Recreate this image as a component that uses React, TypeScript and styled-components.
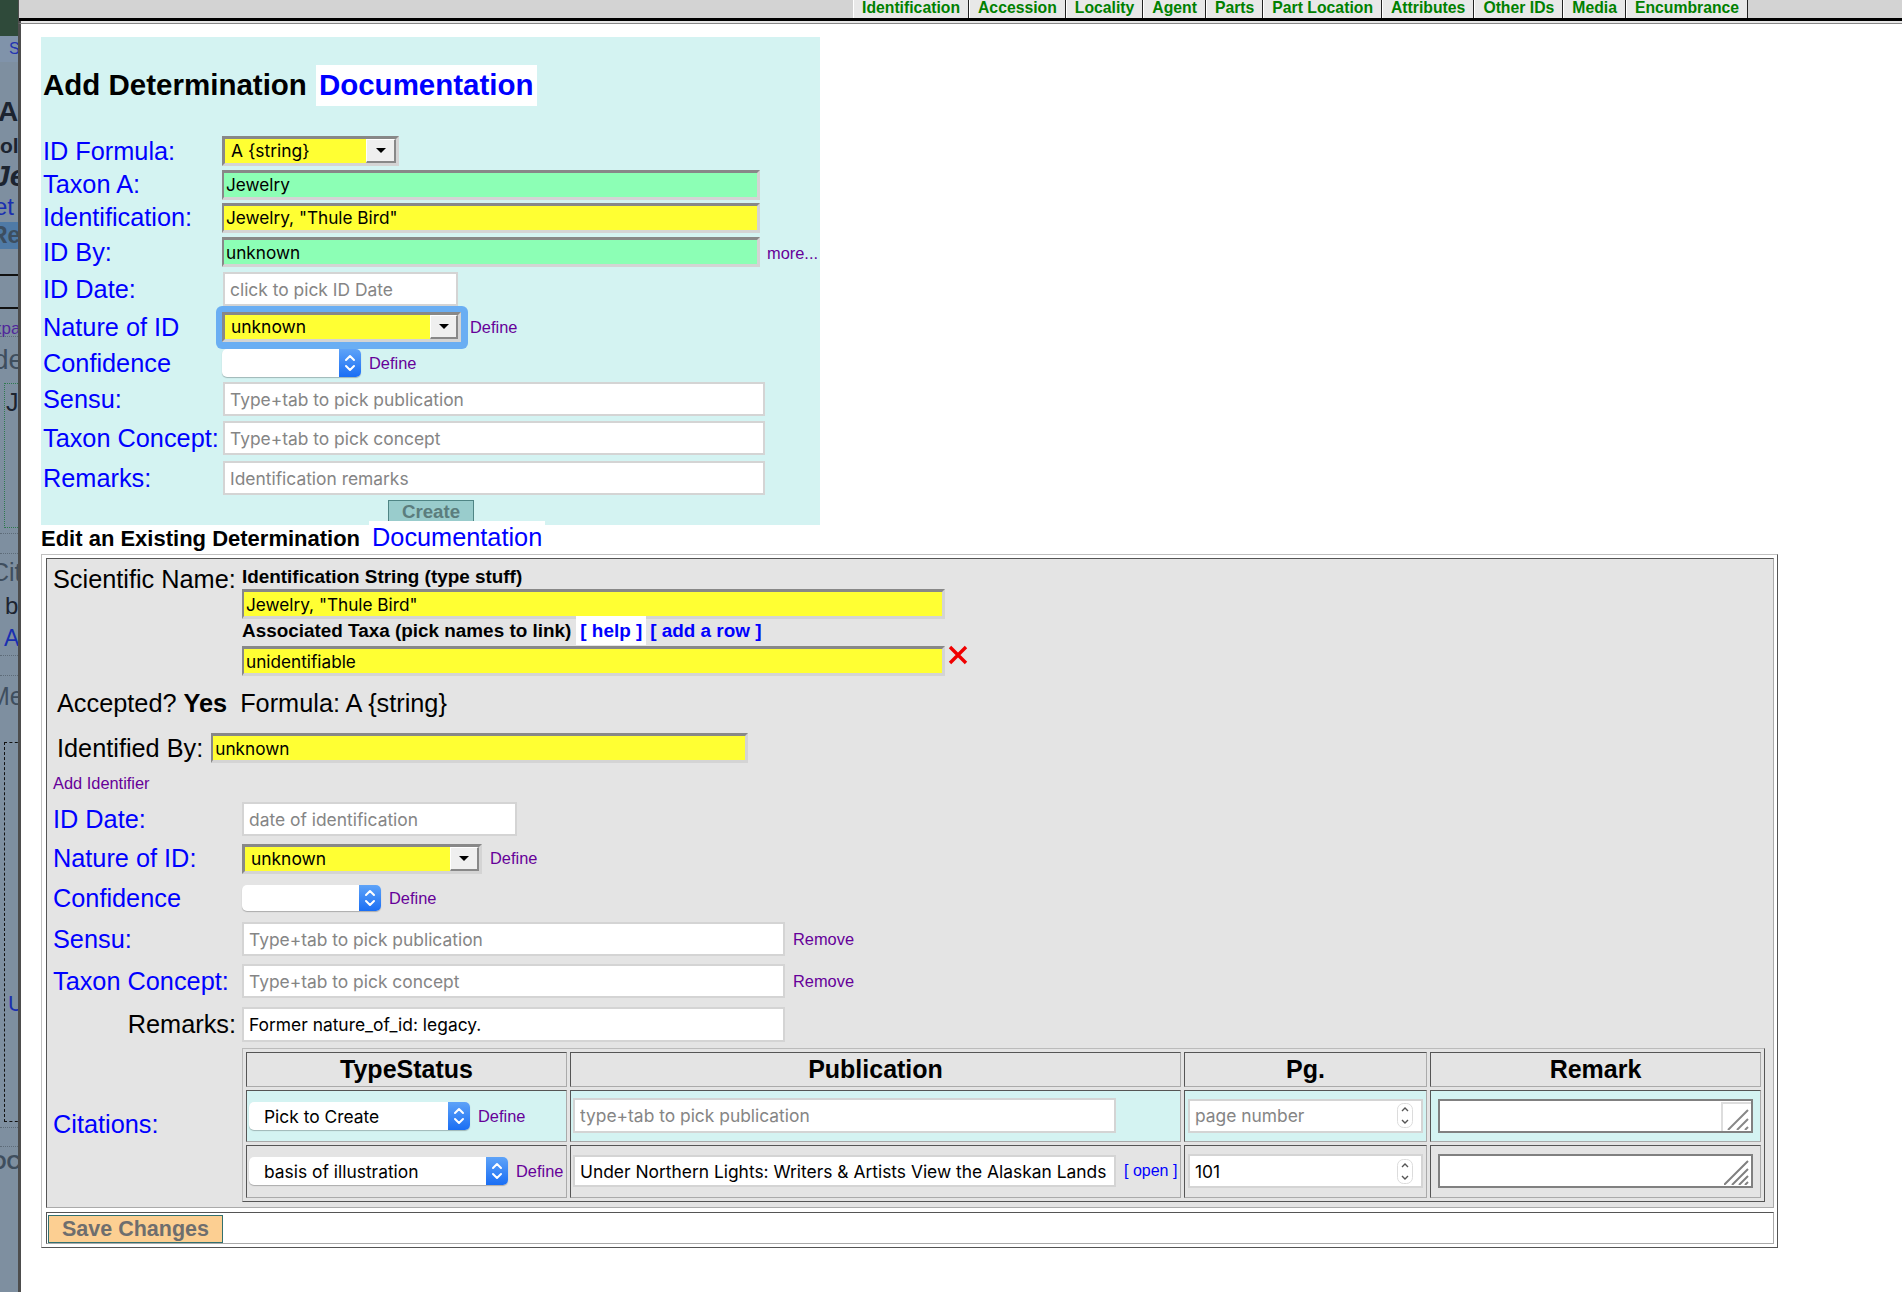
import React from "react";
import styled, { createGlobalStyle } from "styled-components";

const GlobalStyle = createGlobalStyle`
  html, body {
    margin: 0;
    padding: 0;
    background: #fff;
    height: 1292px;
    overflow: hidden;
    font-family: "Liberation Sans", Arial, sans-serif;
  }
  * { box-sizing: border-box; }
`;

const SYSTEM_FONT = `Inter, "Liberation Sans", sans-serif`;

const Page = styled.div`
  display: flex;
  width: 1902px;
  height: 1292px;
  overflow: hidden;
`;

/* the page behind the overlay, only a clipped strip of it shows */
const Backdrop = styled.div`
  flex: 0 0 18px;
  width: 18px;
  height: 1292px;
  overflow: hidden;
  background: #7e8fa0;
`;

interface BackRowProps {
  $h: number;
  $bg?: string;
  $color?: string;
  $size?: number;
  $bold?: boolean;
  $italic?: boolean;
  $x?: number;
  $bottom?: string;
}

const BackRow = styled.div<BackRowProps>`
  display: flex;
  align-items: center;
  height: ${(p) => p.$h}px;
  background: ${(p) => p.$bg || "transparent"};
  color: ${(p) => p.$color || "#1c2430"};
  font-size: ${(p) => p.$size || 16}px;
  font-weight: ${(p) => (p.$bold ? 700 : 400)};
  font-style: ${(p) => (p.$italic ? "italic" : "normal")};
  padding-left: ${(p) => Math.max(p.$x || 0, 0)}px;
  border-bottom: ${(p) => p.$bottom || "none"};
  white-space: nowrap;
`;

/* text of the page behind that the strip cuts at the left */
const BackText = styled.span<{ $x: number }>`
  margin-left: ${(p) => Math.min(p.$x, 0)}px;
`;

const BackBox = styled.div<{ $h: number; $line: string; $pad: number }>`
  height: ${(p) => p.$h}px;
  margin-left: 4px;
  width: 30px;
  border: ${(p) => p.$line};
  padding-top: ${(p) => p.$pad}px;
  padding-left: 1px;
  font-size: 25px;
  color: #1c2430;
`;

const BackU = styled.span`
  color: #1a2fb0;
  padding-left: 2px;
  font-size: 22px;
`;

const Main = styled.div`
  flex: 1;
  display: flex;
  flex-direction: column;
  border-left: 1px solid #4d4d4d;
`;

const TopBar = styled.div`
  display: flex;
  flex: 0 0 21px;
  padding-left: 834px;
  background: #d3d3d3;
  border-bottom: 3px solid #000;
`;

const TopRule = styled.div`
  flex: 0 0 3px;
  margin-left: -1px;
  background: #e6e6e6;
  border-left: 3px solid #4d4d4d;
  border-bottom: 1px solid #888;
`;

const Tab = styled.a`
  display: block;
  height: 18px;
  padding: 0 8px;
  background: #e8e8e8;
  border-left: 1px solid #fff;
  border-right: 1px solid #222;
  color: #008000;
  font-size: 15.75px;
  font-weight: 700;
  line-height: 15px;
  white-space: nowrap;
`;

const Content = styled.div`
  flex: 1;
  padding: 13px 0 0 20px;
  border-left: 2px solid #4d4d4d;
  position: relative;
`;

const AddPanel = styled.div`
  width: 779px;
  height: 488px;
  padding: 0 0 0 2px;
  background: #d4f3f2;
`;

const TitleRow = styled.div`
  display: flex;
  align-items: center;
  height: 97px;
`;

const Title = styled.h1`
  margin: -1px 9px 0 0;
  font-size: 29.5px;
  font-weight: 700;
  color: #000;
`;

const BigDocLink = styled.a`
  display: block;
  margin-top: -1px;
  padding: 0 3px;
  height: 41px;
  line-height: 39px;
  background: #fff;
  color: #0000ff;
  font-size: 29.5px;
  font-weight: 700;
`;

const AddRow = styled.div<{ $h: number }>`
  display: grid;
  grid-template-columns: 179px auto;
  grid-template-rows: ${(p) => p.$h}px;
  justify-content: start;
  align-items: center;
  height: ${(p) => p.$h}px;
`;

const FieldLine = styled.div`
  display: flex;
  align-items: center;
`;

const BlueLabel = styled.label`
  color: #0000ff;
  font-size: 25.3px;
  white-space: nowrap;
`;

const BlackLabel = styled.label<{ $right?: boolean }>`
  color: #000;
  font-size: 25.3px;
  white-space: nowrap;
  text-align: ${(p) => (p.$right ? "right" : "left")};
  padding-right: ${(p) => (p.$right ? "6px" : "0")};
`;

/* bevelled input of the old form css, yellow or green */
const InsetInput = styled.input<{ $w: number; $bg: string }>`
  display: block;
  width: ${(p) => p.$w}px;
  height: 30px;
  padding: 0 0 0 2px;
  border-style: solid;
  border-width: 3px 3px 3px 2px;
  border-color: #888 #d4d4d4 #d4d4d4 #888;
  border-radius: 0;
  outline: none;
  background: ${(p) => p.$bg};
  color: #000;
  font-family: ${SYSTEM_FONT};
  font-size: 17.2px;
`;

const PlainInput = styled.input<{ $w: number; $h?: number; $nudge?: number }>`
  display: block;
  width: ${(p) => p.$w}px;
  height: ${(p) => p.$h || 34}px;
  margin-left: ${(p) => p.$nudge || 0}px;
  padding: 0 5px;
  border: 2px solid #d4d4d4;
  border-radius: 0;
  outline: none;
  background: #fff;
  color: #000;
  font-family: ${SYSTEM_FONT};
  font-size: 17.4px;
  &::placeholder {
    color: #858585;
    opacity: 1;
  }
`;

const YellowSelectBox = styled.div<{ $w: number; $inner: number }>`
  display: grid;
  grid-template-columns: 1fr ${(p) => p.$inner}px;
  align-items: stretch;
  width: ${(p) => p.$w}px;
  height: 30px;
  border-style: solid;
  border-width: 3px;
  border-color: #888 #d4d4d4 #d4d4d4 #888;
  background: #ffff33;
`;

const YellowSelectText = styled.span`
  padding-left: 6px;
  font-family: ${SYSTEM_FONT};
  font-size: 17.4px;
  line-height: 24px;
  color: #000;
`;

const ArrowButton = styled.span`
  display: flex;
  align-items: center;
  justify-content: center;
  background: #efefef;
  border-style: solid;
  border-width: 1px 2px 2px 1px;
  border-color: #fff #888 #888 #fff;
  &::after {
    content: "";
    border-style: solid;
    border-width: 5px 5px 0 5px;
    border-color: #000 transparent transparent transparent;
  }
`;

const FocusRing = styled.div`
  padding: 6px 7px 7px 6px;
  margin-left: -6px;
  background: #6aaef3;
  border-radius: 6px;
`;

const MacSelectBox = styled.div<{ $w: number; $h?: number }>`
  display: flex;
  align-items: stretch;
  justify-content: space-between;
  width: ${(p) => p.$w}px;
  height: ${(p) => p.$h || 28}px;
  background: #fff;
  border-radius: 5px;
  box-shadow: 0 1px 1px rgba(0, 0, 0, 0.25);
`;

const MacSelectText = styled.span`
  padding-left: 15px;
  font-family: ${SYSTEM_FONT};
  font-size: 17.4px;
  line-height: 30px;
  color: #000;
`;

const MacArrowPart = styled.span`
  display: flex;
  align-items: center;
  justify-content: center;
  flex: 0 0 22px;
  border-radius: 0 5px 5px 0;
  background: linear-gradient(#5ea3f8, #1a6ef4);
`;

const MacChevrons = () => (
  <svg width="14" height="22" viewBox="0 0 14 22" fill="none" stroke="#fff" strokeWidth="2" strokeLinecap="round" strokeLinejoin="round">
    <path d="M3 8 L7 4 L11 8" />
    <path d="M3 14 L7 18 L11 14" />
  </svg>
);

const MacSelect = ({ w, h, text }: { w: number; h?: number; text?: string }) => (
  <MacSelectBox $w={w} $h={h}>
    <MacSelectText>{text}</MacSelectText>
    <MacArrowPart>
      <MacChevrons />
    </MacArrowPart>
  </MacSelectBox>
);

const PurpleLink = styled.a<{ $gap?: number; $drop?: number }>`
  margin-left: ${(p) => p.$gap ?? 8}px;
  padding-top: ${(p) => p.$drop || 0}px;
  color: #660099;
  font-size: 16.4px;
  white-space: nowrap;
`;

const CreateRow = styled.div`
  display: flex;
  justify-content: center;
  margin-top: 2px;
`;

const CreateButton = styled.button`
  width: 86px;
  height: 22px;
  padding: 0;
  margin-right: 1px;
  border: 1px solid #4f8585;
  border-bottom: none;
  background: #99cccc;
  color: #5b7d7d;
  font-family: "Liberation Sans", Arial, sans-serif;
  font-size: 18.7px;
  font-weight: 700;
  line-height: 22px;
`;

const EditHeading = styled.div`
  display: flex;
  align-items: flex-start;
  height: 29px;
`;

const EditTitle = styled.h2`
  margin: 1px 9px 0 0;
  font-size: 22px;
  font-weight: 700;
  line-height: 26px;
  color: #000;
`;

const SmallDocLink = styled.a`
  display: block;
  position: relative;
  margin-top: -4px;
  padding: 0 3px;
  height: 33px;
  line-height: 33px;
  background: #fff;
  color: #0000ff;
  font-size: 25.3px;
`;

const OuterTable = styled.div`
  display: flex;
  flex-direction: column;
  gap: 4px;
  width: 1737px;
  height: 694px;
  padding: 3px 3px 3px 4px;
  border-style: solid;
  border-width: 1px;
  border-color: #c0c0c0 #555 #555 #c0c0c0;
`;

const EditCell = styled.div`
  height: 650px;
  padding: 0 0 0 6px;
  background: #e4e4e4;
  border-style: solid;
  border-width: 1px;
  border-color: #555 #aaa #aaa #555;
`;

const NameBlock = styled.div`
  display: grid;
  grid-template-columns: 189px auto;
  justify-content: start;
  align-items: start;
  height: 117px;
`;

const NameStack = styled.div`
  display: flex;
  flex-direction: column;
`;

const NameLabelCell = styled.div`
  padding-top: 5px;
  line-height: 30px;
`;

const SmallBold = styled.div`
  display: flex;
  align-items: center;
  color: #000;
  font-size: 18.9px;
  font-weight: 700;
  white-space: nowrap;
`;

const StringHeading = styled(SmallBold)`
  height: 30px;
  padding-top: 6px;
`;

const TaxaHeading = styled(SmallBold)`
  height: 29px;
  margin-top: -3px;
`;

const HelpLink = styled.a<{ $white?: boolean }>`
  display: block;
  height: 29px;
  line-height: 29px;
  padding: 0 4px;
  margin-left: ${(p) => (p.$white ? "5px" : "0")};
  background: ${(p) => (p.$white ? "#fff" : "transparent")};
  color: #0000ff;
  font-size: 18.9px;
  font-weight: 700;
`;

const TaxonLine = styled.div`
  display: flex;
  align-items: flex-start;
  margin-top: 1px;
`;

const RemoveX = styled.svg`
  flex: 0 0 auto;
  margin: -1px 0 0 3px;
`;

const EditRow = styled.div<{ $h: number; $pad?: number }>`
  display: flex;
  align-items: center;
  height: ${(p) => p.$h}px;
  padding-left: ${(p) => p.$pad || 0}px;
`;

const GridRow = styled.div<{ $h: number }>`
  display: grid;
  grid-template-columns: 189px auto;
  grid-template-rows: ${(p) => p.$h}px;
  justify-content: start;
  align-items: center;
  height: ${(p) => p.$h}px;
`;

const AcceptedText = styled.span<{ $bold?: boolean; $gap?: number }>`
  color: #000;
  font-size: 25.3px;
  font-weight: ${(p) => (p.$bold ? 700 : 400)};
  margin-left: ${(p) => p.$gap || 0}px;
  white-space: nowrap;
`;

const CitationTable = styled.table`
  width: 1523px;
  height: 154px;
  table-layout: fixed;
  border-collapse: separate;
  border-spacing: 3px;
  border-style: solid;
  border-width: 1px;
  border-color: #bbb #555 #555 #bbb;
`;

const HeadCell = styled.th<{ $w: number }>`
  width: ${(p) => p.$w}px;
  height: 35px;
  padding: 0;
  border-style: solid;
  border-width: 1px;
  border-color: #555 #aaa #aaa #555;
  color: #000;
  font-size: 25px;
  font-weight: 700;
`;

const BodyCell = styled.td<{ $teal?: boolean; $pad?: number }>`
  padding: 0 0 0 ${(p) => p.$pad ?? 2}px;
  border-style: solid;
  border-width: 1px;
  border-color: #555 #aaa #aaa #555;
  background: ${(p) => (p.$teal ? "#d4f3f2" : "#e4e4e4")};
`;

const BodyRow = styled.tr<{ $h: number }>`
  height: ${(p) => p.$h}px;
`;

const CellLine = styled.div`
  display: flex;
  align-items: center;
  white-space: nowrap;
`;

const OpenLink = styled.a`
  margin-left: 8px;
  color: #0000ff;
  font-size: 16px;
`;

const NumberBox = styled.div`
  display: flex;
  align-items: center;
  justify-content: space-between;
  width: 235px;
  height: 34px;
  padding: 0 8px 0 5px;
  border: 2px solid #d4d4d4;
  background: #fff;
  font-family: ${SYSTEM_FONT};
  font-size: 17.4px;
  color: #000;
`;

const NumberHint = styled.span`
  color: #858585;
`;

const Spinner = () => (
  <svg width="16" height="25" viewBox="0 0 16 25" fill="none">
    <rect x="0.5" y="0.5" width="15" height="24" rx="6" fill="#fff" stroke="#dcdcdc" />
    <path d="M5 8 L8 5 L11 8 M5 17 L8 20 L11 17" stroke="#555" strokeWidth="1.4" />
  </svg>
);

const RemarkBox = styled.div`
  position: relative;
  width: 315px;
  height: 34px;
  margin-left: 7px;
  background: #fff;
  border: 2px solid #808080;
`;

const Grip = styled.svg`
  position: absolute;
  right: 1px;
  bottom: 1px;
`;

const GripCorner = styled.span`
  position: absolute;
  top: 1px;
  right: 0;
  bottom: 0;
  width: 30px;
  border-left: 2px solid #ddd;
  border-top: 2px solid #ddd;
`;

const SmallGrip = () => (
  <Grip width="24" height="24" viewBox="0 0 24 24" fill="none" stroke="#888" strokeWidth="2">
    <path d="M2 24 L22 4 M11 24 L22 13 M19 24 L22 21" />
  </Grip>
);

const LargeGrip = () => (
  <Grip width="26" height="26" viewBox="0 0 26 26" fill="none" stroke="#808080" strokeWidth="2">
    <path d="M0 26 L24 2 M8 26 L24 10 M15 26 L24 17 M21 26 L24 23" />
  </Grip>
);

const SaveCell = styled.div`
  height: 32px;
  padding: 2px 1px 0;
  background: #fff;
  border-style: solid;
  border-width: 1px;
  border-color: #555 #aaa #aaa #555;
`;

const SaveButton = styled.button`
  display: block;
  width: 175px;
  height: 28px;
  padding: 0;
  border: 1px solid #33706f;
  background: #fccf92;
  color: #6e6e6e;
  font-family: "Liberation Sans", Arial, sans-serif;
  font-size: 21.5px;
  font-weight: 700;
  line-height: 26px;
`;

const TABS = [
  "Identification",
  "Accession",
  "Locality",
  "Agent",
  "Parts",
  "Part Location",
  "Attributes",
  "Other IDs",
  "Media",
  "Encumbrance",
];

const DOTS = "1px dotted #5d6b78";

type BehindRow = BackRowProps & { t?: string };

const BehindTop: BehindRow[] = [
  { $h: 36, $bg: "#2f4a3a" },
  { $h: 26, $bg: "#8093aa", t: "S", $color: "#2433b0", $x: 9, $size: 16 },
  { $h: 30 },
  { $h: 40, t: "A", $bold: true, $size: 28, $x: -2 },
  { $h: 28, t: "ol", $bold: true, $size: 21 },
  { $h: 32, t: "Je", $bold: true, $italic: true, $size: 30, $x: -7 },
  { $h: 30, t: "et", $color: "#1a2fb0", $size: 24, $x: -6 },
  { $h: 27, t: "Re", $bold: true, $size: 23, $x: -9, $bg: "#4f7aa6", $color: "#3c4e60" },
  { $h: 27, $bottom: "2px solid #111" },
  { $h: 33, $bottom: "2px solid #111" },
  { $h: 13 },
  { $h: 15, t: "xpa", $color: "#50269a", $size: 17, $x: -7, $bottom: DOTS },
  { $h: 46, t: "de", $color: "#3f4e5e", $size: 28, $x: -7 },
];

const BehindMiddle: BehindRow[] = [
  { $h: 6, $bottom: DOTS },
  { $h: 20, $bottom: DOTS },
  { $h: 36, t: "Cit", $color: "#3f4e5e", $size: 25, $x: -9 },
  { $h: 32, t: "b", $size: 24, $x: 5 },
  { $h: 34, t: "A", $color: "#1a2fb0", $size: 23, $x: 4, $bottom: DOTS },
  { $h: 20, $bottom: DOTS },
  { $h: 40, t: "Me", $color: "#3f4e5e", $size: 25, $x: -11 },
  { $h: 26 },
];

const BehindBottom: BehindRow[] = [
  { $h: 6, $bottom: DOTS },
  { $h: 19, $bottom: DOTS },
  { $h: 30, t: "OC", $color: "#3f4e5e", $size: 20, $bold: true, $x: -9 },
];

const renderBehind = (rows: BehindRow[]) =>
  rows.map(({ t, ...row }, i) => (
    <BackRow key={i} {...row}>
      {t && <BackText $x={row.$x || 0}>{t}</BackText>}
    </BackRow>
  ));

const App = () => {
  return (
    <>
      <GlobalStyle />
      <Page>
        <Backdrop>
          {renderBehind(BehindTop)}
          <BackBox $h={145} $line="1px dotted #2e7a4e" $pad={4}>
            J
          </BackBox>
          {renderBehind(BehindMiddle)}
          <BackBox $h={380} $line="1px dashed #111" $pad={245}>
            <BackU>U</BackU>
          </BackBox>
          {renderBehind(BehindBottom)}
        </Backdrop>
        <Main>
          <TopBar>
            {TABS.map((tab) => (
              <Tab key={tab}>{tab}</Tab>
            ))}
          </TopBar>
          <TopRule />
          <Content>
            <AddPanel>
              <TitleRow>
                <Title>Add Determination</Title>
                <BigDocLink>Documentation</BigDocLink>
              </TitleRow>
              <AddRow $h={34}>
                <BlueLabel>ID Formula:</BlueLabel>
                <YellowSelectBox $w={177} $inner={30}>
                  <YellowSelectText>A {"{string}"}</YellowSelectText>
                  <ArrowButton />
                </YellowSelectBox>
              </AddRow>
              <AddRow $h={33}>
                <BlueLabel>Taxon A:</BlueLabel>
                <InsetInput $w={538} $bg="#8cffb5" defaultValue="Jewelry" readOnly />
              </AddRow>
              <AddRow $h={33}>
                <BlueLabel>Identification:</BlueLabel>
                <InsetInput $w={538} $bg="#ffff33" defaultValue={'Jewelry, "Thule Bird"'} readOnly />
              </AddRow>
              <AddRow $h={36}>
                <BlueLabel>ID By:</BlueLabel>
                <FieldLine>
                  <InsetInput $w={538} $bg="#8cffb5" defaultValue="unknown" readOnly />
                  <PurpleLink $gap={7} $drop={2}>more...</PurpleLink>
                </FieldLine>
              </AddRow>
              <AddRow $h={38}>
                <BlueLabel>ID Date:</BlueLabel>
                <PlainInput $w={235} $nudge={1} placeholder="click to pick ID Date" readOnly />
              </AddRow>
              <AddRow $h={38}>
                <BlueLabel>Nature of ID</BlueLabel>
                <FieldLine>
                  <FocusRing>
                    <YellowSelectBox $w={239} $inner={28}>
                      <YellowSelectText>unknown</YellowSelectText>
                      <ArrowButton />
                    </YellowSelectBox>
                  </FocusRing>
                  <PurpleLink $gap={2}>Define</PurpleLink>
                </FieldLine>
              </AddRow>
              <AddRow $h={34}>
                <BlueLabel>Confidence</BlueLabel>
                <FieldLine>
                  <MacSelect w={139} />
                  <PurpleLink>Define</PurpleLink>
                </FieldLine>
              </AddRow>
              <AddRow $h={38}>
                <BlueLabel>Sensu:</BlueLabel>
                <PlainInput $w={542} $nudge={1} placeholder="Type+tab to pick publication" readOnly />
              </AddRow>
              <AddRow $h={40}>
                <BlueLabel>Taxon Concept:</BlueLabel>
                <PlainInput $w={542} $nudge={1} placeholder="Type+tab to pick concept" readOnly />
              </AddRow>
              <AddRow $h={40}>
                <BlueLabel>Remarks:</BlueLabel>
                <PlainInput $w={542} $nudge={1} placeholder="Identification remarks" readOnly />
              </AddRow>
              <CreateRow>
                <CreateButton>Create</CreateButton>
              </CreateRow>
            </AddPanel>

            <EditHeading>
              <EditTitle>Edit an Existing Determination</EditTitle>
              <SmallDocLink>Documentation</SmallDocLink>
            </EditHeading>

            <OuterTable>
              <EditCell>
                <NameBlock>
                  <NameLabelCell>
                    <BlackLabel>Scientific Name:</BlackLabel>
                  </NameLabelCell>
                  <NameStack>
                    <StringHeading>Identification String (type stuff)</StringHeading>
                    <InsetInput $w={703} $bg="#ffff33" defaultValue={'Jewelry, "Thule Bird"'} readOnly />
                    <TaxaHeading>
                      Associated Taxa (pick names to link)
                      <HelpLink $white>[ help ]</HelpLink>
                      <HelpLink>[ add a row ]</HelpLink>
                    </TaxaHeading>
                    <TaxonLine>
                      <InsetInput $w={703} $bg="#ffff33" defaultValue="unidentifiable" readOnly />
                      <RemoveX width="20" height="20" viewBox="0 0 20 20" fill="none" stroke="#f00000" strokeWidth="3.4">
                        <path d="M2 2 L18 18 M18 2 L2 18" />
                      </RemoveX>
                    </TaxonLine>
                  </NameStack>
                </NameBlock>

                <EditRow $h={54} $pad={4}>
                  <AcceptedText>Accepted?</AcceptedText>
                  <AcceptedText $bold $gap={7}>Yes</AcceptedText>
                  <AcceptedText $gap={13}>Formula: A {"{string}"}</AcceptedText>
                </EditRow>
                <EditRow $h={36} $pad={4}>
                  <AcceptedText>Identified By:</AcceptedText>
                  <AcceptedText $gap={8} />
                  <InsetInput $w={537} $bg="#ffff33" defaultValue="unknown" readOnly />
                </EditRow>
                <EditRow $h={34}>
                  <PurpleLink $gap={0}>Add Identifier</PurpleLink>
                </EditRow>
                <GridRow $h={38}>
                  <BlueLabel>ID Date:</BlueLabel>
                  <PlainInput $w={275} placeholder="date of identification" readOnly />
                </GridRow>
                <GridRow $h={41}>
                  <BlueLabel>Nature of ID:</BlueLabel>
                  <FieldLine>
                    <YellowSelectBox $w={240} $inner={29}>
                      <YellowSelectText>unknown</YellowSelectText>
                      <ArrowButton />
                    </YellowSelectBox>
                    <PurpleLink>Define</PurpleLink>
                  </FieldLine>
                </GridRow>
                <GridRow $h={38}>
                  <BlueLabel>Confidence</BlueLabel>
                  <FieldLine>
                    <MacSelect w={139} h={26} />
                    <PurpleLink>Define</PurpleLink>
                  </FieldLine>
                </GridRow>
                <GridRow $h={44}>
                  <BlueLabel>Sensu:</BlueLabel>
                  <FieldLine>
                    <PlainInput $w={543} placeholder="Type+tab to pick publication" readOnly />
                    <PurpleLink>Remove</PurpleLink>
                  </FieldLine>
                </GridRow>
                <GridRow $h={40}>
                  <BlueLabel>Taxon Concept:</BlueLabel>
                  <FieldLine>
                    <PlainInput $w={543} placeholder="Type+tab to pick concept" readOnly />
                    <PurpleLink>Remove</PurpleLink>
                  </FieldLine>
                </GridRow>
                <GridRow $h={46}>
                  <BlackLabel $right>Remarks:</BlackLabel>
                  <PlainInput $w={543} $h={35} defaultValue="Former nature_of_id: legacy." readOnly />
                </GridRow>
                <GridRow $h={155}>
                  <BlueLabel>Citations:</BlueLabel>
                  <CitationTable>
                    <thead>
                      <tr>
                        <HeadCell $w={321}>TypeStatus</HeadCell>
                        <HeadCell $w={611}>Publication</HeadCell>
                        <HeadCell $w={243}>Pg.</HeadCell>
                        <HeadCell $w={331}>Remark</HeadCell>
                      </tr>
                    </thead>
                    <tbody>
                      <BodyRow $h={52}>
                        <BodyCell $teal>
                          <CellLine>
                            <MacSelect w={221} text="Pick to Create" />
                            <PurpleLink $drop={2}>Define</PurpleLink>
                          </CellLine>
                        </BodyCell>
                        <BodyCell $teal>
                          <PlainInput $w={543} $h={35} placeholder="type+tab to pick publication" readOnly />
                        </BodyCell>
                        <BodyCell $teal $pad={3}>
                          <NumberBox>
                            <NumberHint>page number</NumberHint>
                            <Spinner />
                          </NumberBox>
                        </BodyCell>
                        <BodyCell $teal $pad={0}>
                          <RemarkBox>
                            <GripCorner />
                            <SmallGrip />
                          </RemarkBox>
                        </BodyCell>
                      </BodyRow>
                      <BodyRow $h={53}>
                        <BodyCell>
                          <CellLine>
                            <MacSelect w={259} text="basis of illustration" />
                            <PurpleLink $drop={1}>Define</PurpleLink>
                          </CellLine>
                        </BodyCell>
                        <BodyCell>
                          <CellLine>
                            <PlainInput
                              $w={543}
                              $h={32}
                              defaultValue="Under Northern Lights: Writers & Artists View the Alaskan Lands"
                              readOnly
                            />
                            <OpenLink>[ open ]</OpenLink>
                          </CellLine>
                        </BodyCell>
                        <BodyCell $pad={3}>
                          <NumberBox>
                            101
                            <Spinner />
                          </NumberBox>
                        </BodyCell>
                        <BodyCell $pad={0}>
                          <RemarkBox>
                            <LargeGrip />
                          </RemarkBox>
                        </BodyCell>
                      </BodyRow>
                    </tbody>
                  </CitationTable>
                </GridRow>
              </EditCell>
              <SaveCell>
                <SaveButton>Save Changes</SaveButton>
              </SaveCell>
            </OuterTable>
          </Content>
        </Main>
      </Page>
    </>
  );
};

export default App;
